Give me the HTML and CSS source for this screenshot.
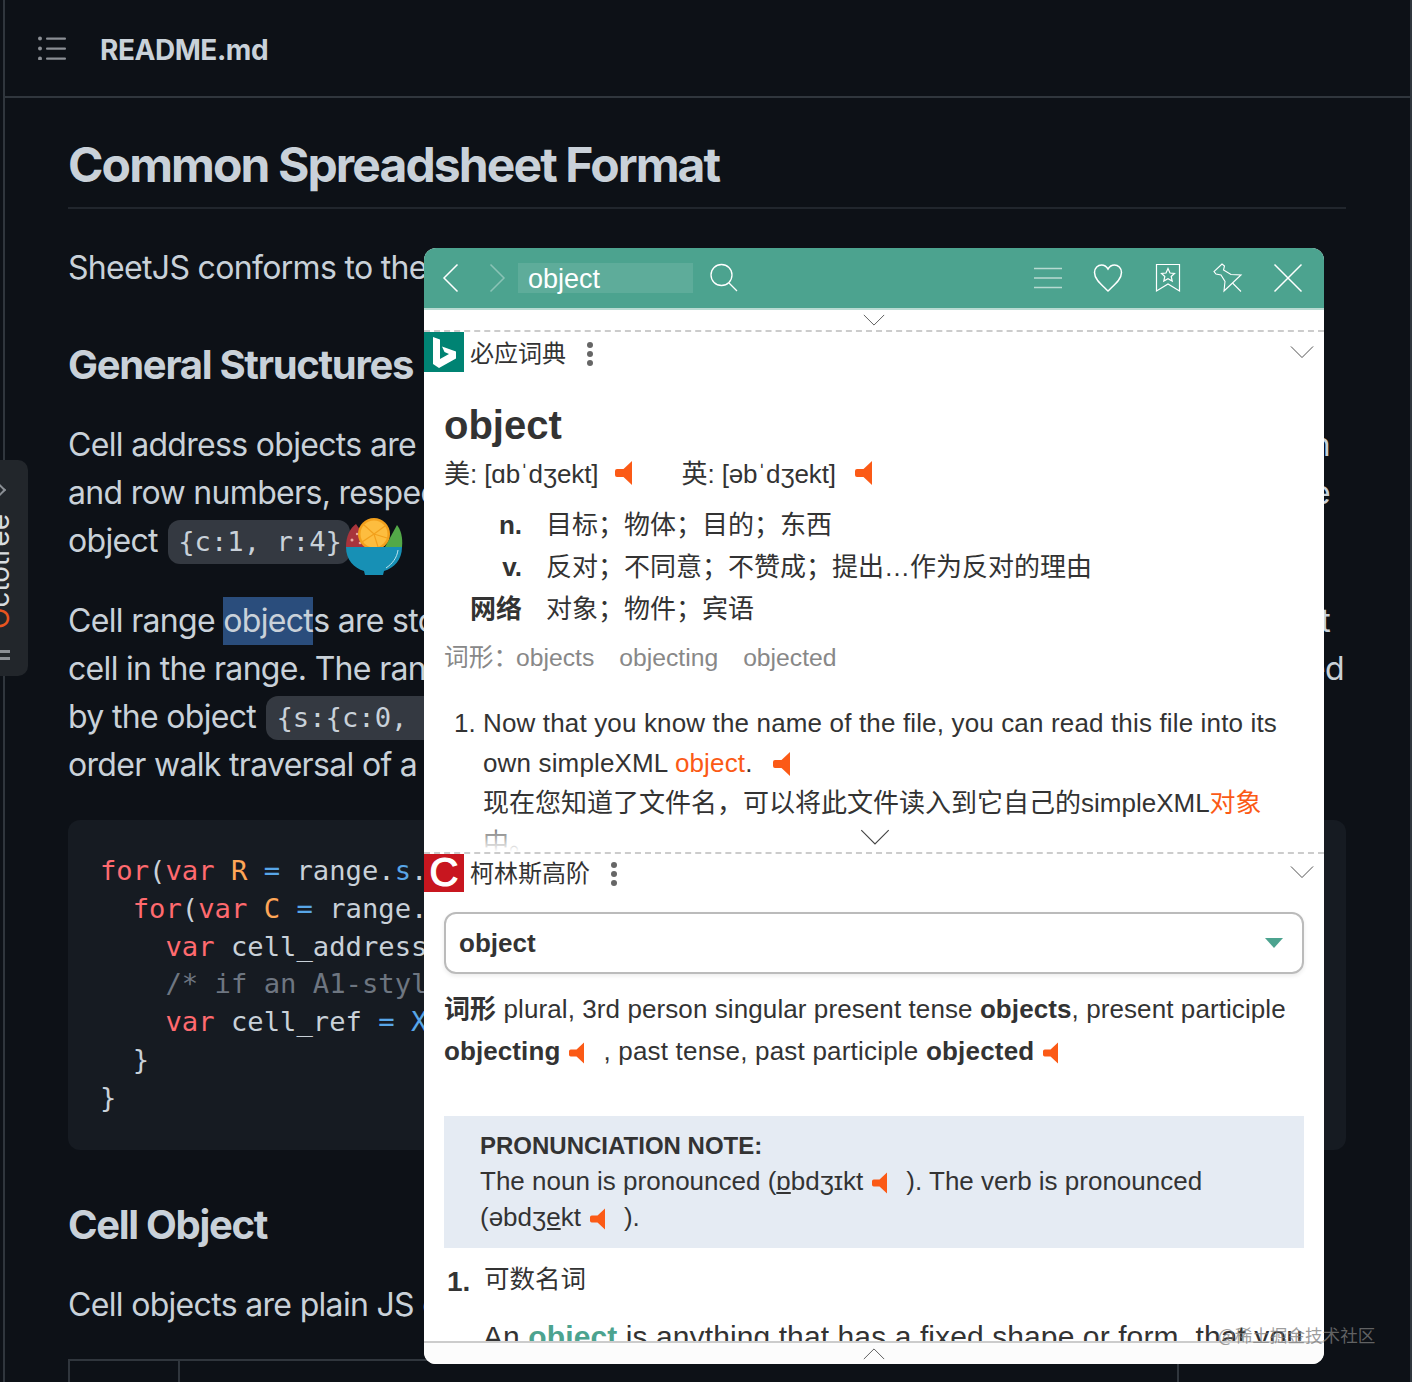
FILE: index.html
```html
<!DOCTYPE html>
<html lang="en">
<head>
    <meta charset="UTF-8">
    <meta name="viewport" content="width=device-width, initial-scale=1.0">
    <title>README.md</title>
    <link rel="stylesheet" href="styles.css">
</head>
<body>
    <svg class="icon-defs" aria-hidden="true">
        <symbol id="speaker" viewBox="0 0 17 24">
            <path d="M17 0V24L8.500 16H2Q0 16 0 14V10Q0 8 2 8H8.500Z"/>
        </symbol>
        <symbol id="chev-down" viewBox="0 0 26 14">
            <path d="M1 1 13 13 25 1" fill="none" stroke="currentColor" stroke-width="1"/>
        </symbol>
    </svg>

    <div class="readme">
        <div class="readme-head">
            <svg class="list-icon" viewBox="0 0 28 24" width="28" height="24">
                <g fill="#8b8f95">
                    <circle cx="2" cy="2.500" r="2"/><circle cx="2" cy="12.500" r="2"/><circle cx="2" cy="22.500" r="2"/>
                    <rect x="8" y="1.500" width="20" height="2.200" rx="1"/><rect x="8" y="11.500" width="20" height="2.200" rx="1"/><rect x="8" y="21.500" width="20" height="2.200" rx="1"/>
                </g>
            </svg>
            <span class="readme-name">README.md</span>
        </div>
        <div class="markdown">
            <h1>Common Spreadsheet Format</h1>
            <p class="intro">SheetJS conforms to the Common Spreadsheet Format (CSF):</p>
            <h2 class="first-h2">General Structures</h2>
            <p><span class="line"><span>Cell address objects are stored as <code>{c:C, r:R}</code> where C and R are 0-indexed</span><span>column</span></span>
            <span class="line"><span>and row numbers, respectively. For example, the cell address B5 is represented by</span><span>the</span></span>
            object <code>{c:1, r:4}</code>.</p>
            <p><span class="line"><span>Cell range <span class="picked">object</span>s are stored as <code>{s:S, e:E}</code> where S is the first cell and E is the</span><span>last</span></span>
            <span class="line line-full"><span>cell in the range. The ranges are inclusive. For example, the range A3:B7 is</span><span>represented</span></span>
            by the object <code>{s:{c:0, r:2}, e:{c:1, r:6}}</code>. Utility functions perform a row-major<br>
            order walk traversal of a sheet range:</p>
<pre class="code"><span class="kw">for</span>(<span class="kw">var</span> <span class="vr">R</span> <span class="op">=</span> range.<span class="op">s</span>.r; R &lt;= range.e.r; ++R) {
  <span class="kw">for</span>(<span class="kw">var</span> <span class="vr">C</span> <span class="op">=</span> range.s.c; C &lt;= range.e.c; ++C) {
    <span class="kw">var</span> cell_address = {c:C, r:R};
    <span class="cm">/* if an A1-style address is needed, encode the address */</span>
    <span class="kw">var</span> cell_ref <span class="op">=</span> <span class="op">XLSX</span>.utils.encode_cell(cell_address);
  }
}</pre>
            <h2>Cell Object</h2>
            <p>Cell objects are plain JS objects with the following keys:</p>
            <div class="keys-table">
                <div class="keys-cell keys-first"></div>
                <div class="keys-cell keys-wide"></div>
            </div>
        </div>
    </div>

    <div class="octotree">
        <span class="octo-arrow"></span>
        <span class="octo-name"><b>O</b>ctotree</span>
        <span class="octo-bars"></span>
    </div>

    <svg class="bowl" viewBox="0 0 58 60" width="58" height="60">
        <path d="M1 29C1 18 5 10 11 6L27 29Z" fill="#a8343c"/>
        <circle cx="7" cy="22" r="1.500" fill="#e8a9a0"/><circle cx="15" cy="25" r="1.300" fill="#e8a9a0"/><circle cx="12" cy="16" r="1.200" fill="#e8a9a0"/>
        <path d="M40 29 52 7C56 12 58 20 57 29Z" fill="#53a948"/>
        <circle cx="29" cy="16" r="16" fill="#f2a01c"/>
        <circle cx="29" cy="16" r="13.500" fill="#fdbd3f"/>
        <path d="M29 16 19 7M29 16 40 8M29 16 42 20M29 16 33 29M29 16 17 24" stroke="#f2a01c" stroke-width="1.200"/>
        <path d="M1 29H57C57 42 49 50 39 53L38 57H20L19 53C9 50 1 42 1 29Z" fill="#1790b5"/>
        <path d="M53 32C52 40 47 46 41 50" fill="none" stroke="#bfe4ee" stroke-width="1"/>
    </svg>

    <div class="popup">
        <div class="pop-bar">
            <svg class="bar-icon" viewBox="0 0 30 30" width="30" height="30"><path d="M21.500 1.500 8 15 21.500 28.500" fill="none" stroke="#fff" stroke-width="1.500"/></svg>
            <svg class="bar-icon bar-next" viewBox="0 0 30 30" width="30" height="30"><path d="M8.500 1.500 22 15 8.500 28.500" fill="none" stroke="#fff" stroke-width="1.500"/></svg>
            <div class="pop-input">object</div>
            <svg class="bar-icon bar-search" viewBox="0 0 30 30" width="30" height="30"><circle cx="12.500" cy="12" r="10.500" fill="none" stroke="#fff" stroke-width="1.300"/><path d="M20 20 28 28" stroke="#fff" stroke-width="1.300"/></svg>
            <span class="bar-gap"></span>
            <svg class="bar-icon bar-menu" viewBox="0 0 30 30" width="30" height="30"><path d="M1 5.500H29M1 15H29M1 24.500H29" stroke="#fff" stroke-width="1.700" opacity=".6"/></svg>
            <svg class="bar-icon" viewBox="0 0 30 30" width="30" height="30"><path d="M15 28C9 22 1.500 16.500 1.500 9.500 1.500 5 5 2 8.500 2 11 2 13.500 3.500 15 6 16.500 3.500 19 2 21.500 2 25 2 28.500 5 28.500 9.500 28.500 16.500 21 22 15 28Z" fill="none" stroke="#fff" stroke-width="1.500"/></svg>
            <svg class="bar-icon" viewBox="0 0 30 30" width="30" height="30"><path d="M3.500 1.500H26.500V28L15 21 3.500 28Z" fill="none" stroke="#fff" stroke-width="1.200"/><path d="M15 5.500 17 10 21.500 10.500 18.200 13.500 19.200 18 15 15.700 10.800 18 11.800 13.500 8.500 10.500 13 10Z" fill="none" stroke="#fff" stroke-width="1.200"/></svg>
            <svg class="bar-icon" viewBox="0 0 30 30" width="30" height="30"><path d="M9 1 11.500 3 10.500 7 18 11.500 28 12 19.500 20 11 28 12 18.500 8 12 3 11 1 8.500Z" fill="none" stroke="#fff" stroke-width="1.100"/><path d="M19.500 20 28 28.500" stroke="#fff" stroke-width="1.100"/></svg>
            <svg class="bar-icon" viewBox="0 0 30 30" width="30" height="30"><path d="M1.500 1.500 28.500 28.500M28.500 1.500 1.500 28.500" stroke="#fff" stroke-width="1.500"/></svg>
        </div>
        <div class="fold-top"><svg class="chev chev-sm"><use href="#chev-down"/></svg></div>

        <section class="dict dict-bing">
            <div class="dict-head">
                <div class="dict-logo logo-bing">
                    <svg viewBox="0 0 40 40" width="40" height="40"><path d="M9 5 16 7.500V27L25 22 20.500 20 18 14.500 32 19.500V26.500L15 36 9 32Z" fill="#fff"/></svg>
                </div>
                <span class="dict-title">必应词典</span>
                <span class="dict-more"><i></i><i></i><i></i></span>
                <svg class="chev chev-fold"><use href="#chev-down"/></svg>
            </div>
            <div class="dict-body">
                <div class="word">object</div>
                <div class="phon">
                    <span>美: [ɑbˈdʒekt]</span><svg class="speaker"><use href="#speaker"/></svg>
                    <span class="phon-uk">英: [əbˈdʒekt]</span><svg class="speaker"><use href="#speaker"/></svg>
                </div>
                <div class="def"><b>n.</b><span>目标；物体；目的；东西</span></div>
                <div class="def"><b>v.</b><span>反对；不同意；不赞成；提出…作为反对的理由</span></div>
                <div class="def"><b>网络</b><span>对象；物件；宾语</span></div>
                <div class="forms">词形：<span class="forms-first">objects</span><span>objecting</span><span>objected</span></div>
                <div class="sample">
                    <span class="sample-no">1.</span>
                    <div><span class="sample-en">Now that you know the name of the file, you can read this file into its<br>
                    own simpleXML <em>object</em>.</span><svg class="speaker speaker-line"><use href="#speaker"/></svg><br>
                    现在您知道了文件名，可以将此文件读入到它自己的simpleXML<em>对象</em><br>
                    中。</div>
                </div>
            </div>
            <div class="dict-fade"></div>
            <svg class="chev chev-more"><use href="#chev-down"/></svg>
        </section>

        <section class="dict dict-collins">
            <div class="dict-head">
                <div class="dict-logo logo-collins">C</div>
                <span class="dict-title">柯林斯高阶</span>
                <span class="dict-more"><i></i><i></i><i></i></span>
                <svg class="chev chev-fold"><use href="#chev-down"/></svg>
            </div>
            <div class="dict-body">
                <div class="picker"><span>object</span><i class="picker-arrow"></i></div>
                <div class="inflect">
                    <b>词形</b> plural, 3rd person singular present tense <b>objects</b>, present participle<br>
                    <b>objecting</b><svg class="speaker speaker-sm"><use href="#speaker"/></svg><span class="after-speaker">, past tense, past participle <b>objected</b></span><svg class="speaker speaker-sm"><use href="#speaker"/></svg>
                </div>
                <div class="note">
                    <b class="note-title">PRONUNCIATION NOTE:</b>
                    The noun is pronounced (<u>ɒ</u>bdʒɪkt<svg class="speaker speaker-sm"><use href="#speaker"/></svg><span class="after-speaker">). The verb is pronounced</span><br>
                    (əbd<u>ʒe</u>kt<svg class="speaker speaker-sm"><use href="#speaker"/></svg><span class="after-speaker">).</span>
                </div>
                <div class="sense"><b>1.</b><span>可数名词</span></div>
                <div class="sense-text">An <strong>object</strong> is anything that has a fixed shape or form, that you</div>
            </div>
        </section>

        <div class="fold-bottom"><svg class="chev chev-up"><use href="#chev-down"/></svg></div>
    </div>

    <div class="watermark">@稀土掘金技术社区</div>
</body>
</html>
```

FILE: styles.css
```css
body {
    margin: 0;
    height: 1382px;
    overflow: hidden;
    position: relative;
    background-color: #0d1117;
    color: #c9d1d9;
    font-family: Inter, "Noto Sans CJK SC", sans-serif;
}
.icon-defs {
    display: none;
}

/* page behind the popup */
.readme {
    margin: 0 0 0 3px;
    width: 1409px;
    height: 1382px;
    overflow: hidden;
    box-sizing: border-box;
    border-left: 2px solid #30363d;
    border-right: 2px solid #30363d;
}
.readme-head {
    display: flex;
    align-items: center;
    box-sizing: border-box;
    height: 98px;
    padding: 0 0 0 33px;
    border-bottom: 2px solid #30363d;
}
.list-icon {
    margin-right: 34px;
}
.readme-name {
    padding-top: 4px;
    font-size: 28px;
    font-weight: 700;
    letter-spacing: -0.45px;
}
.markdown {
    padding: 0 64px 0 63px;
    font-size: 32px;
    line-height: 48px;
    letter-spacing: -0.68px;
    white-space: nowrap;
}
.markdown h1 {
    margin: 37px 0 0;
    height: 72px;
    font-size: 48px;
    line-height: 60px;
    font-weight: 700;
    letter-spacing: -1.900px;
    border-bottom: 2px solid #21262d;
}
.markdown h2 {
    margin: 51px 0 0;
    font-size: 40px;
    line-height: 48px;
    font-weight: 700;
    letter-spacing: -1.300px;
}
.markdown p {
    margin: 32px 0 0;
}
.markdown .intro {
    margin-top: 35px;
}
.markdown .first-h2 {
    margin-top: 49px;
}
.line {
    display: flex;
    justify-content: space-between;
    padding-right: 16px;
}
.line-full {
    padding-right: 2px;
}
.markdown code {
    display: inline-block;
    height: 44px;
    line-height: 44px;
    padding: 0 8px 0 10px;
    margin: 3px 0 0 2px;
    border-radius: 12px;
    background-color: #343941;
    font-family: "DejaVu Sans Mono", monospace;
    font-size: 27.2px;
    letter-spacing: 0;
    vertical-align: top;
}
.picked {
    display: inline-block;
    background-color: #2a4d7c;
}
.code {
    margin: 31px 0 0;
    height: 266px;
    padding: 32px;
    border-radius: 12px;
    background-color: #161b22;
    font-family: "DejaVu Sans Mono", monospace;
    font-size: 27.2px;
    line-height: 37.8px;
    letter-spacing: 0;
}
.kw {
    color: #ff6a6f;
}
.vr {
    color: #ffa657;
}
.op {
    color: #58a6e8;
}
.cm {
    color: #6e7681;
}
.keys-table {
    display: flex;
    margin-top: 30px;
    width: 1230px;
    height: 60px;
    border-top: 2px solid #30363d;
    border-left: 2px solid #30363d;
}
.keys-cell {
    border-right: 2px solid #30363d;
}
.keys-first {
    width: 108px;
}
.keys-wide {
    width: 997px;
}

/* octotree tab on the left edge */
.octotree {
    position: absolute;
    left: 0;
    top: 460px;
    width: 28px;
    height: 216px;
    overflow: hidden;
    border-radius: 0 10px 10px 0;
    background-color: #22262b;
}
.octo-arrow {
    position: absolute;
    left: -6px;
    top: 25px;
    width: 8px;
    height: 8px;
    border-top: 2px solid #8b8f95;
    border-right: 2px solid #8b8f95;
    transform: rotate(45deg);
}
.octo-name {
    position: absolute;
    left: -19px;
    top: 54px;
    writing-mode: vertical-rl;
    transform: rotate(180deg);
    font-size: 28px;
    line-height: 36px;
    color: #d9dcdf;
}
.octo-name b {
    font-weight: 400;
    color: #e8551f;
}
.octo-bars {
    position: absolute;
    left: 0;
    top: 190px;
    width: 10px;
    height: 4px;
    border-top: 3px solid #8b8f95;
    border-bottom: 3px solid #8b8f95;
}
.bowl {
    position: absolute;
    left: 345px;
    top: 518px;
}

/* dictionary popup */
.popup {
    position: absolute;
    left: 424px;
    top: 248px;
    width: 900px;
    height: 1116px;
    display: flex;
    flex-direction: column;
    overflow: hidden;
    border-radius: 12px;
    background-color: #fff;
    color: #333;
    font-family: "Liberation Sans", "Noto Sans CJK SC", sans-serif;
    font-size: 26px;
}
.pop-bar {
    flex: none;
    display: flex;
    align-items: center;
    gap: 30px;
    height: 60px;
    padding: 0 21px 0 12px;
    border-bottom: 2px solid #b9dbd2;
    background-color: #4ca38f;
}
.bar-icon {
    flex: none;
}
.bar-next {
    margin-left: -14px;
    margin-right: -24px;
    opacity: 0.35;
}
.bar-search {
    margin-left: -14px;
}
.bar-gap {
    flex: 1;
}
.pop-input {
    width: 165px;
    height: 30px;
    padding-left: 10px;
    font-size: 27px;
    line-height: 32px;
    color: #fff;
    background-color: rgba(255, 255, 255, 0.1);
}
.fold-top {
    flex: none;
    height: 20px;
    position: relative;
}
.chev {
    display: block;
    color: #444;
}
.chev-sm {
    position: absolute;
    left: 439px;
    top: 4px;
    width: 22px;
    height: 12px;
}
.dict {
    flex: none;
    position: relative;
    overflow: hidden;
    box-sizing: border-box;
    border-top: 2px dashed #ccc;
}
.dict-bing {
    height: 522px;
}
.dict-collins {
    height: 489px;
}
.dict-collins .dict-head {
    margin-top: -2px;
}
.dict-head {
    display: flex;
    align-items: center;
    height: 40px;
}
.dict-logo {
    flex: none;
    width: 40px;
    height: 40px;
}
.logo-bing {
    background-color: #008373;
}
.logo-collins {
    background-color: #c8161f;
    color: #fff;
    font-size: 40px;
    line-height: 41px;
    text-align: center;
    -webkit-text-stroke: 1.200px #fff;
}
.dict-title {
    margin: -2px 0 0 6px;
    font-size: 24px;
    color: #333;
}
.dict-more {
    display: flex;
    flex-direction: column;
    gap: 3px;
    margin: 4px 0 0 21px;
}
.dict-more i {
    width: 6px;
    height: 6px;
    border-radius: 50%;
    background-color: #666;
}
.chev-fold {
    margin-left: auto;
    margin-right: 10px;
    width: 24px;
    height: 14px;
}
.dict-body {
    padding: 0 20px;
}
.word {
    margin-top: 29px;
    font-size: 40px;
    line-height: 48px;
    font-weight: bold;
}
.phon {
    display: flex;
    align-items: center;
    height: 40px;
    margin-top: 2px;
    letter-spacing: -0.1px;
}
.phon .speaker {
    margin-top: 4px;
}
.phon-uk {
    margin-left: 49px;
}
.phon-uk + .speaker {
    margin-left: 19px;
}
.speaker {
    width: 17px;
    height: 24px;
    margin-left: 17px;
    fill: #fb5a16;
    flex: none;
    vertical-align: -4px;
}
.speaker-line {
    margin-left: 20px;
}
.speaker-sm {
    width: 15px;
    height: 22px;
    margin-left: 9px;
}
.def {
    display: flex;
    height: 42px;
    line-height: 42px;
}
.phon + .def {
    margin-top: 13px;
}
.def b {
    width: 78px;
    text-align: right;
    margin-right: 24px;
}
.forms {
    margin-top: 8px;
    line-height: 40px;
    font-size: 24.700px;
    color: #888;
}
.forms span {
    margin-right: 25px;
}
.forms .forms-first {
    margin-left: -2px;
}
.sample {
    display: flex;
    margin-top: 25px;
    margin-left: 10px;
    line-height: 40px;
}
.sample-no {
    width: 29px;
}
.sample-en {
    letter-spacing: 0.15px;
}
.sample em {
    font-style: normal;
    color: #fb5a16;
}
.dict-fade {
    position: absolute;
    left: 0;
    right: 0;
    bottom: 0;
    height: 28px;
    background: linear-gradient(rgba(255, 255, 255, 0.2), #fff);
}
.chev-more {
    position: absolute;
    left: 436px;
    bottom: 7px;
    width: 30px;
    height: 16px;
}
.picker {
    display: flex;
    align-items: center;
    justify-content: space-between;
    box-sizing: border-box;
    height: 62px;
    margin-top: 20px;
    padding: 0 19px 0 13px;
    border: 2px solid #bbb;
    border-radius: 12px;
    box-shadow: 0 2px 4px rgba(0, 0, 0, 0.08);
    font-weight: bold;
}
.picker-arrow {
    width: 0;
    height: 0;
    border-left: 9px solid transparent;
    border-right: 9px solid transparent;
    border-top: 10px solid #4ca38f;
}
.inflect {
    margin-top: 14px;
    line-height: 42px;
    letter-spacing: 0.09px;
}
.inflect .after-speaker {
    letter-spacing: 0.2px;
}
.after-speaker {
    margin-left: 19px;
}
.note {
    margin-top: 44px;
    height: 108px;
    padding: 12px 36px;
    line-height: 36px;
    background-color: #e5ebf3;
}
.note-title {
    display: block;
    font-size: 24px;
    line-height: 35px;
}
.sense {
    display: flex;
    align-items: flex-start;
    margin-top: 14px;
    height: 55px;
}
.sense b {
    width: 37px;
    margin-left: 3px;
    font-size: 28px;
    line-height: 40px;
}
.sense span {
    margin-top: -1px;
    font-size: 25.500px;
    line-height: 36px;
}
.sense-text {
    padding-left: 39px;
    font-size: 30px;
    line-height: 40px;
    letter-spacing: 0.1px;
    white-space: nowrap;
}
.sense-text strong {
    color: #4ca38f;
}
.fold-bottom {
    flex: 1;
    position: relative;
    border-top: 2px solid #ccc;
    background-color: #fcfcfc;
}
.chev-up {
    position: absolute;
    left: 439px;
    top: 5px;
    width: 22px;
    height: 12px;
    transform: rotate(180deg);
}
.watermark {
    position: absolute;
    left: 1218px;
    top: 1323px;
    font-family: "Noto Sans CJK SC", sans-serif;
    font-size: 17.600px;
    line-height: 24px;
    color: rgba(125, 125, 125, 0.75);
}
```
